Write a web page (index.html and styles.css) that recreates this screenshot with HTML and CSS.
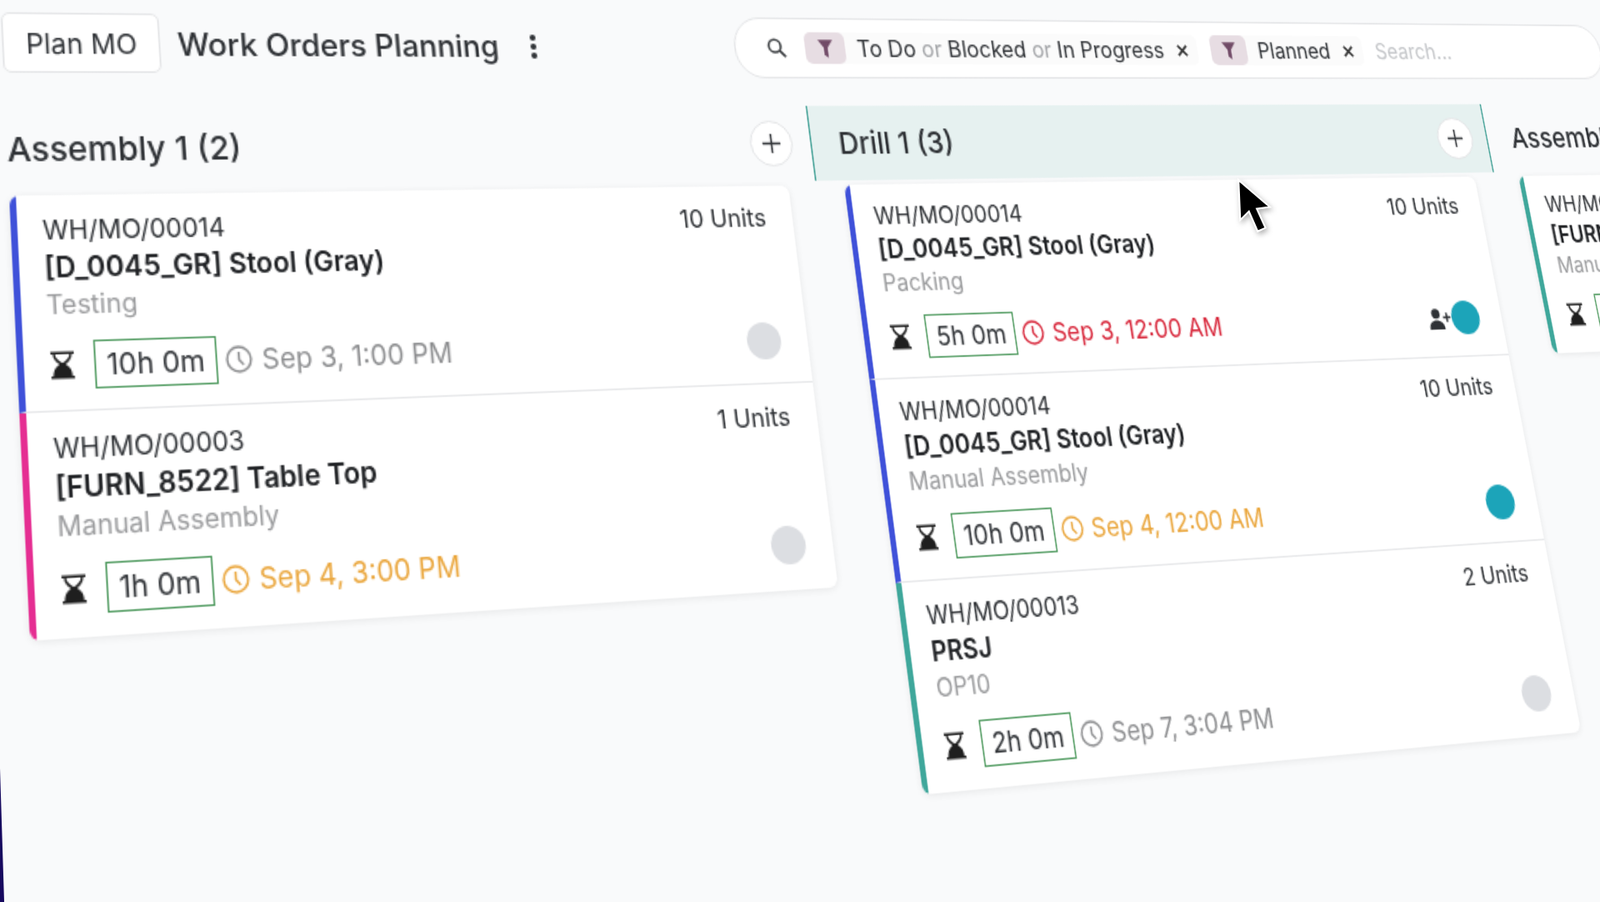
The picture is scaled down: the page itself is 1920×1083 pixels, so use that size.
FILE: index.html
```html
<!DOCTYPE html>
<html>

<head>
    <title>Work Orders Planning</title>
    <link rel="stylesheet" href="styles.css">
</head>

<body>
    <svg class="icon-defs" xmlns="http://www.w3.org/2000/svg">
        <symbol id="hourglass" viewBox="0 0 14 16">
            <path fill-rule="evenodd" d="M0 0h14v1.400h-1.400c0 3-1.900 4.600-3.900 6.100 1.500 1.200 3 2.100 3.500 4 .4 1.300.5 2.200.5 3.100H14V16H0v-1.400h1.300c0-.9.100-1.800.5-3.100.5-1.900 2-2.800 3.500-4C3.300 6 1.400 4.400 1.400 1.400H0zM2.700 1.400c.1 2.400 2.300 4 4.300 5.400 2-1.400 4.200-3 4.300-5.400z" />
        </symbol>
        <symbol id="clock" viewBox="0 0 16 16">
            <circle cx="8" cy="8" r="7" fill="none" stroke="currentColor" stroke-width="1.300" />
            <path d="M8 3.800v4.400l2.600 3" fill="none" stroke="currentColor" stroke-width="1.300" />
        </symbol>
        <symbol id="funnel" viewBox="0 0 14 16">
            <path d="M0 0h14L8.800 7v9l-3.600-2.500V7z" />
        </symbol>
        <symbol id="close" viewBox="0 0 10 10">
            <path d="M1 1l8 8M9 1l-8 8" fill="none" stroke="currentColor" stroke-width="1.800" />
        </symbol>
        <symbol id="plus" viewBox="0 0 16 16">
            <path d="M8 1v14M1 8h14" fill="none" stroke="currentColor" stroke-width="1.400" />
        </symbol>
    </svg>

    <div class="stage">
        <div class="toolbar">
            <button class="plan-button">Plan MO</button>
            <h1 class="page-title">Work Orders Planning</h1>
            <span class="kebab"><i></i><i></i><i></i></span>
            <div class="search-bar">
                <svg class="search-icon" viewBox="0 0 16 16">
                    <circle cx="6.500" cy="6.500" r="5" fill="none" stroke="currentColor" stroke-width="1.800" />
                    <path d="M10.200 10.200L15 15" fill="none" stroke="currentColor" stroke-width="2" />
                </svg>
                <div class="chip">
                    <span class="chip-icon"><svg><use href="#funnel" /></svg></span>
                    <span class="chip-text">To Do <em>or</em> Blocked <em>or</em> In Progress</span>
                    <svg class="chip-close"><use href="#close" /></svg>
                </div>
                <div class="chip">
                    <span class="chip-icon"><svg><use href="#funnel" /></svg></span>
                    <span class="chip-text">Planned</span>
                    <svg class="chip-close"><use href="#close" /></svg>
                </div>
                <span class="search-input">Search...</span>
            </div>
        </div>

        <div class="board">
            <section class="column column-first">
                <header class="column-head">
                    <h2>Assembly 1 (2)</h2>
                    <span class="add-button"><svg><use href="#plus" /></svg></span>
                </header>
                <div class="orders">
                    <article class="order blue">
                        <div class="order-top"><span>WH/MO/00014</span><span class="units">10 Units</span></div>
                        <div class="order-name">[D_0045_GR] Stool (Gray)</div>
                        <div class="order-op">Testing</div>
                        <div class="order-foot">
                            <svg class="hourglass"><use href="#hourglass" /></svg>
                            <span class="duration">10h 0m</span>
                            <span class="date"><svg><use href="#clock" /></svg>Sep 3, 1:00 PM</span>
                            <span class="avatar"></span>
                        </div>
                    </article>
                    <article class="order pink">
                        <div class="order-top"><span>WH/MO/00003</span><span class="units">1 Units</span></div>
                        <div class="order-name">[FURN_8522] Table Top</div>
                        <div class="order-op">Manual Assembly</div>
                        <div class="order-foot">
                            <svg class="hourglass"><use href="#hourglass" /></svg>
                            <span class="duration">1h 0m</span>
                            <span class="date soon"><svg><use href="#clock" /></svg>Sep 4, 3:00 PM</span>
                            <span class="avatar"></span>
                        </div>
                    </article>
                </div>
            </section>

            <section class="column column-active">
                <header class="column-head">
                    <h2>Drill 1 (3)</h2>
                    <span class="add-button"><svg><use href="#plus" /></svg></span>
                </header>
                <div class="orders">
                    <article class="order blue">
                        <div class="order-top"><span>WH/MO/00014</span><span class="units">10 Units</span></div>
                        <div class="order-name">[D_0045_GR] Stool (Gray)</div>
                        <div class="order-op">Packing</div>
                        <div class="order-foot">
                            <svg class="hourglass"><use href="#hourglass" /></svg>
                            <span class="duration">5h 0m</span>
                            <span class="date late"><svg><use href="#clock" /></svg>Sep 3, 12:00 AM</span>
                            <svg class="assign" viewBox="0 0 18 14">
                                <circle cx="6" cy="3.500" r="3.300" />
                                <path d="M0 14c0-4 2.500-6 6-6s6 2 6 6z" />
                                <path d="M14.500 3v6M11.500 6h6" fill="none" stroke="currentColor" stroke-width="1.400" />
                            </svg>
                            <span class="avatar teal"></span>
                        </div>
                    </article>
                    <article class="order blue">
                        <div class="order-top"><span>WH/MO/00014</span><span class="units">10 Units</span></div>
                        <div class="order-name">[D_0045_GR] Stool (Gray)</div>
                        <div class="order-op">Manual Assembly</div>
                        <div class="order-foot">
                            <svg class="hourglass"><use href="#hourglass" /></svg>
                            <span class="duration">10h 0m</span>
                            <span class="date soon"><svg><use href="#clock" /></svg>Sep 4, 12:00 AM</span>
                            <span class="avatar teal"></span>
                        </div>
                    </article>
                    <article class="order green">
                        <div class="order-top"><span>WH/MO/00013</span><span class="units">2 Units</span></div>
                        <div class="order-name">PRSJ</div>
                        <div class="order-op">OP10</div>
                        <div class="order-foot">
                            <svg class="hourglass"><use href="#hourglass" /></svg>
                            <span class="duration">2h 0m</span>
                            <span class="date"><svg><use href="#clock" /></svg>Sep 7, 3:04 PM</span>
                            <span class="avatar"></span>
                        </div>
                    </article>
                </div>
            </section>

            <section class="column">
                <header class="column-head">
                    <h2>Assembly 2 (1)</h2>
                </header>
                <div class="orders">
                    <article class="order green">
                        <div class="order-top"><span>WH/MO/00003</span><span class="units">1 Units</span></div>
                        <div class="order-name">[FURN_8522] Table Top</div>
                        <div class="order-op">Manual Assembly</div>
                        <div class="order-foot">
                            <svg class="hourglass"><use href="#hourglass" /></svg>
                            <span class="duration">1h 0m</span>
                        </div>
                    </article>
                </div>
            </section>
        </div>
    </div>

    <div class="window-edge"></div>
    <svg class="cursor" viewBox="0 0 42 66">
        <path d="M3 2l2 46 10-10 10 23 9-4-10-22 15-2z" fill="#000" stroke="#fff" stroke-width="2" />
    </svg>
</body>

</html>
```

FILE: styles.css
```css
html,
body {
    height: 100%;
}

body {
    margin: 0;
    overflow: hidden;
    background: #f9fafb;
    color: #2f3236;
    font-family: Inter, "Liberation Sans", sans-serif;
    font-size: 14px;
}

.icon-defs {
    display: none;
}

/* whole board is filmed at an angle, the layout inside stays flat */
.stage {
    width: 1400px;
    padding: 5px 0 0 10px;
    transform-origin: 0 0;
    transform: matrix3d(2.00357, .020732, 0, .00019965, .09, 1.93003, 0, -.00016237, 0, 0, 1, 0, -15.82, 3.189, 0, 1.017488);
    filter: blur(.3px);
}

.toolbar {
    display: flex;
    align-items: center;
    height: 42px;
}

.plan-button {
    width: 98px;
    height: 38px;
    margin: 0 0 2px -2px;
    padding: 0;
    background: white;
    border: 1px solid #e3e4e6;
    border-radius: 5px;
    color: #2f3236;
    font-family: inherit;
    font-size: 17.300px;
}

.page-title {
    margin: 0 0 2px 11px;
    font-size: 20.300px;
    font-weight: 500;
    white-space: nowrap;
}

.kebab {
    display: flex;
    flex-direction: column;
    gap: 2px;
    margin: 0 0 1px 22px;
}

.kebab i {
    width: 4px;
    height: 4px;
    border-radius: 50%;
    background: #2f3236;
}

.search-bar {
    position: relative;
    display: flex;
    align-items: center;
    box-sizing: border-box;
    width: 714px;
    height: 42px;
    margin-left: auto;
    margin-right: 200px;
    padding-left: 23px;
    background: white;
    border: 1px solid #e3e4e6;
    border-radius: 20px;
}

.search-icon {
    width: 14px;
    height: 14px;
    margin-right: 14px;
    color: #3a3d40;
    flex: none;
}

.chip {
    display: flex;
    align-items: center;
    flex: none;
    margin-right: 11px;
    padding-right: 8px;
    background: #fbfbfb;
    border-radius: 5px;
}

.chip-icon {
    display: flex;
    align-items: center;
    justify-content: center;
    width: 30px;
    height: 22px;
    background: #e7dde3;
    border-radius: 5px;
    color: #714b67;
}

.chip-icon svg {
    width: 11px;
    height: 13px;
    fill: currentColor;
}

.chip-text {
    margin-left: 9px;
    font-size: 16.100px;
    white-space: nowrap;
}

.chip-text em {
    color: #a3a5a8;
    font-style: normal;
}

.chip-close {
    width: 9px;
    height: 9px;
    margin-left: 11px;
    color: #333;
}

.search-input {
    color: #c4c6c9;
    font-size: 16px;
}

.board {
    display: flex;
    margin-top: 19px;
}

.column {
    flex: none;
    width: 548px;
}

.column-first {
    width: 533px;
}

.column-head {
    display: flex;
    align-items: center;
    justify-content: space-between;
    box-sizing: border-box;
    height: 51px;
    padding: 0 12px 0 20px;
    border: solid transparent;
    border-width: 0 1px;
}

.column-first .column-head {
    padding-left: 0;
}

.column-first h2 {
    margin-left: -3px;
}

.column-active .column-head {
    background: #e6f1f0;
    border-color: #3a9c91;
}

.column-head h2 {
    font-size: 20.700px;
    font-weight: 500;
    margin-top: 0;
    margin-bottom: 0;
    white-space: nowrap;
}

.add-button {
    display: flex;
    align-items: center;
    justify-content: center;
    width: 31px;
    height: 31px;
    background: white;
    border: 1px solid #e3e4e6;
    border-radius: 50%;
    box-sizing: border-box;
    color: #2f3236;
}

.add-button svg {
    width: 15px;
    height: 15px;
}

.orders {
    margin: 3px 18px 0 21px;
    background: white;
    border-radius: 6px;
    box-shadow: 0 1px 5px rgba(0, 0, 0, 0.08);
    overflow: hidden;
}

.column-first .orders {
    margin: 3px 20px 0 -2px;
}

.order {
    box-sizing: border-box;
    height: 130px;
    padding: 12px 19px 0 15px;
    border-left: 4px solid #3f51d9;
    border-bottom: 1px solid #e6e7e9;
}

.order:last-child {
    border-bottom: none;
}

.order.pink {
    border-left-color: #e52e92;
}

.order.green {
    border-left-color: #3fa79b;
}

.order-top {
    display: flex;
    align-items: center;
    justify-content: space-between;
    font-size: 16px;
    line-height: 18px;
    white-space: nowrap;
}

.units {
    font-size: 16.500px;
}

.order-name {
    margin-top: 3px;
    color: #212326;
    font-size: 17.300px;
    font-weight: 600;
    line-height: 22px;
    white-space: nowrap;
}

.order-op {
    margin-top: 1px;
    color: #9a9b9d;
    font-size: 16px;
    line-height: 20px;
    white-space: nowrap;
}

.order-foot {
    display: flex;
    align-items: center;
    height: 30px;
    margin-top: 11px;
}

.hourglass {
    width: 14px;
    height: 17px;
    margin-left: 1px;
    fill: #1f1f1f;
    flex: none;
}

.duration {
    margin-left: 12px;
    padding: 0 6.500px;
    border: 1px solid #4f9a5f;
    font-size: 17.500px;
    line-height: 27px;
    white-space: nowrap;
}

.date {
    display: flex;
    align-items: center;
    margin-left: 5px;
    color: #8d8e90;
    font-size: 17.300px;
    white-space: nowrap;
}

.date svg {
    width: 17px;
    height: 17px;
    margin-right: 6px;
}

.date.soon {
    color: #eaa63c;
}

.date.late {
    color: #d8283c;
}

.assign {
    width: 20px;
    height: 15px;
    margin-left: auto;
    fill: #2f3236;
    color: #2f3236;
}

.avatar {
    width: 24px;
    height: 24px;
    margin-left: auto;
    background: #dcdee2;
    border-radius: 50%;
    flex: none;
}

.assign + .avatar {
    margin-left: 0;
}

.avatar.teal {
    background: #1ca4b9;
}

.window-edge {
    position: absolute;
    left: 0;
    bottom: 0;
    width: 5px;
    height: 160px;
    background: #17095f;
    clip-path: polygon(0 0, 100% 100%, 0 100%);
}

.cursor {
    position: absolute;
    left: 1483px;
    top: 214px;
    width: 44px;
    height: 69px;
    filter: drop-shadow(2px 3px 3px rgba(0, 0, 0, 0.3));
}
```
